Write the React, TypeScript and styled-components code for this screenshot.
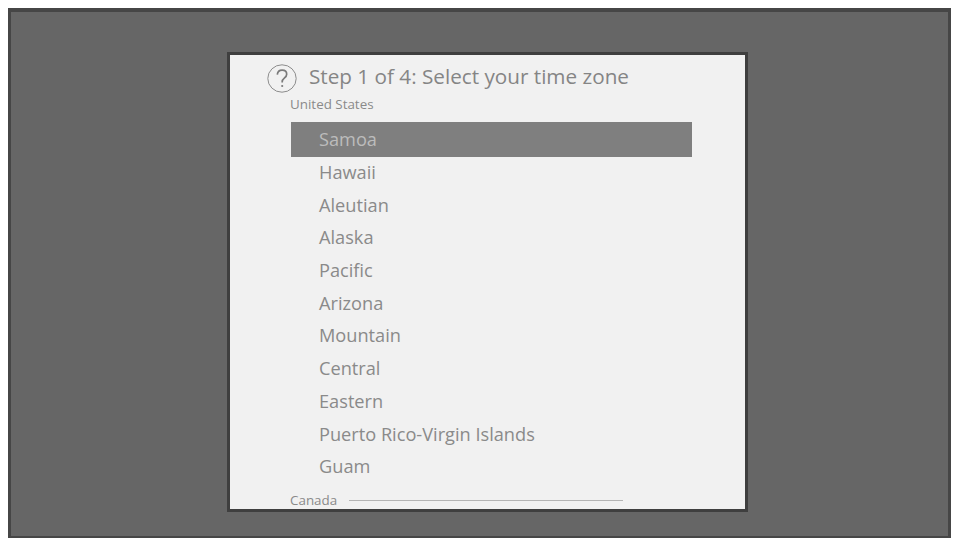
import React from 'react'
import styled, { createGlobalStyle } from 'styled-components'

const GlobalStyle = createGlobalStyle`
  html, body {
    margin: 0;
    background: #ffffff;
  }
  body {
    padding: 8px 0 0 8px;
    font-family: 'Open Sans', 'Noto Sans', sans-serif;
  }
`

const Backdrop = styled.div`
  box-sizing: border-box;
  width: 943px;
  height: 530px;
  background-color: #666666;
  border: solid #464646;
  border-width: 4px 3px 2px;
  padding: 40px 0 0 216px;
`

const Dialog = styled.div`
  box-sizing: border-box;
  width: 521px;
  height: 460px;
  background-color: #f1f1f1;
  border: 3px solid #3f3f3f;
  overflow: hidden;
`

const Header = styled.div`
  display: flex;
  align-items: flex-start;
  gap: 11px;
  margin: 9px 0 0 37px;
  height: 28px;
`

const HelpIcon = styled.svg`
  width: 31px;
  height: 29px;
  flex: none;
`

const Title = styled.div`
  font-size: 20.7px;
  line-height: 24px;
  color: #858585;
  white-space: nowrap;
`

const GroupLabel = styled.div`
  font-size: 13.4px;
  line-height: 16px;
  color: #8a8a8a;
  margin: 4px 0 0 60px;
`

const ZoneList = styled.div`
  width: 401px;
  margin: 10px 0 0 61px;
`

const ZoneRow = styled.div<{ $selected?: boolean }>`
  height: ${(props) => (props.$selected ? '35px' : '32.7px')};
  line-height: ${(props) => (props.$selected ? '35px' : '31px')};
  padding-left: 28px;
  font-size: 18.2px;
  color: ${(props) => (props.$selected ? '#bcbcbc' : '#8a8a8a')};
  background-color: ${(props) => (props.$selected ? '#7f7f7f' : 'transparent')};
`

const NextGroup = styled.div`
  display: flex;
  align-items: center;
  gap: 12px;
  width: 333px;
  margin: 8px 0 0 60px;
  font-size: 13.4px;
  line-height: 16px;
  color: #8a8a8a;
`

const GroupRule = styled.div`
  flex: 1;
  height: 1px;
  margin-top: 1px;
  background-color: #b4b4b4;
`

const zones = [
  'Samoa',
  'Hawaii',
  'Aleutian',
  'Alaska',
  'Pacific',
  'Arizona',
  'Mountain',
  'Central',
  'Eastern',
  'Puerto Rico-Virgin Islands',
  'Guam',
]

const App = () => {
  return (
    <>
      <GlobalStyle />
      <Backdrop>
        <Dialog>
          <Header>
            <HelpIcon viewBox="0 0 31 29">
              <ellipse cx="15" cy="14.5" rx="14.2" ry="13.7" fill="none" stroke="#8c8c8c" strokeWidth="1" />
              <path
                d="M10.3 10.6c.3-2.9 2.2-4.4 4.8-4.4 2.7 0 4.6 1.6 4.6 4 0 1.8-1 2.8-2.4 3.9-1.4 1.1-2.1 2-2.1 3.7v.8"
                fill="none"
                stroke="#7a7a7a"
                strokeWidth="1.7"
              />
              <circle cx="15.2" cy="22" r="1.1" fill="#7a7a7a" />
            </HelpIcon>
            <Title>Step 1 of 4: Select your time zone</Title>
          </Header>
          <GroupLabel>United States</GroupLabel>
          <ZoneList>
            {zones.map((zone, index) => (
              <ZoneRow key={zone} $selected={index === 0}>
                {zone}
              </ZoneRow>
            ))}
          </ZoneList>
          <NextGroup>
            Canada
            <GroupRule />
          </NextGroup>
        </Dialog>
      </Backdrop>
    </>
  )
}

export default App
